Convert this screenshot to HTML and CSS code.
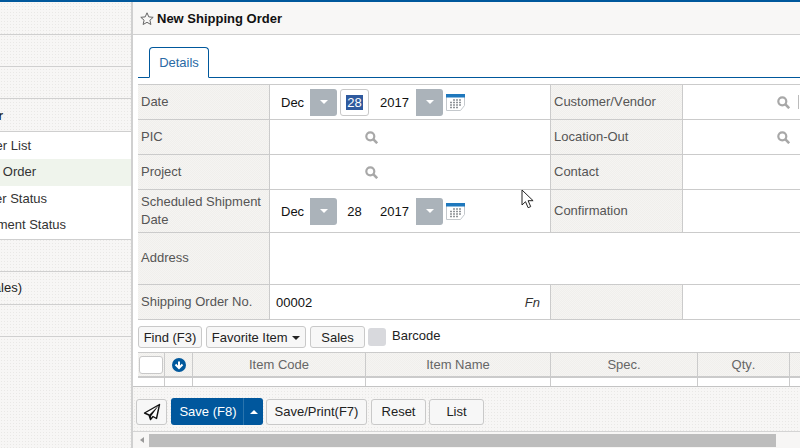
FILE: index.html
```html
<!DOCTYPE html>
<html lang="en">
<head>
<meta charset="utf-8">
<title>New Shipping Order</title>
<link rel="stylesheet" href="styles.css">
</head>
<body>
<div class="topbar"></div>
<div class="app">
  <aside class="side">
    <div class="side-row first"></div>
    <div class="side-row"></div>
    <div class="side-row"></div>
    <div class="side-row tall"><span class="side-text bold p-r">Shipping Order</span></div>
    <ul class="side-list">
      <li class="side-item p-a">Shipping Order List</li>
      <li class="side-item active p-b">New Shipping Order</li>
      <li class="side-item p-c">Shipping Order Status</li>
      <li class="side-item p-d">Shipment Status</li>
    </ul>
    <div class="side-row"></div>
    <div class="side-row tall"><span class="side-text p-e">Order (Sales)</span></div>
    <div class="side-row"></div>
  </aside>
  <main class="main">
    <header class="title">
      <svg class="star" width="14" height="14" viewBox="0 0 14 14"><path d="M7 .8l1.800 4.100 4.400.4-3.300 2.900 1 4.300L7 10.300l-3.900 2.200 1-4.300L.8 5.300l4.400-.4z" fill="none" stroke="#666" stroke-width="1"/></svg>
      <b>New Shipping Order</b>
    </header>
    <div class="tabs"><div class="tab">Details</div></div>
    <section class="form">
      <div class="lbl r1">Date</div>
      <div class="val date r1">
        <span class="mon">Dec</span><span class="sel"><i class="caret"></i></span><span class="day boxed"><em>28</em></span><span class="yr">2017</span><span class="sel"><i class="caret"></i></span>
        <svg class="cal" width="19" height="17" viewBox="0 0 19 17"><path d="M.5 .5h18v11l-4 5H.5z" fill="#fff" stroke="#c4c8cc"/><rect width="19" height="3.500" fill="#1f78bd"/><path d="M4 11h2M7 11h2M10 11h2M13 11h2M4 8.500h2M7 8.500h2M10 8.500h2M13 8.500h2M7 6h2M10 6h2M13 6h2M4 13.500h2M7 13.500h2M10 13.500h2" stroke="#8e9297" stroke-width="1.500"/></svg>
      </div>
      <div class="lbl r1">Customer/Vendor</div>
      <div class="val search end r1">
        <svg class="mag" width="13" height="13" viewBox="0 0 13 13"><circle cx="5.300" cy="5.300" r="4" fill="none" stroke="#a8a8a8" stroke-width="2.200"/><path d="M8.200 8.200l4 4" stroke="#a8a8a8" stroke-width="2.600"/></svg><span class="sep"></span>
      </div>

      <div class="lbl r1">PIC</div>
      <div class="val search mid r1">
        <svg class="mag" width="13" height="13" viewBox="0 0 13 13"><circle cx="5.300" cy="5.300" r="4" fill="none" stroke="#a8a8a8" stroke-width="2.200"/><path d="M8.200 8.200l4 4" stroke="#a8a8a8" stroke-width="2.600"/></svg>
      </div>
      <div class="lbl r1">Location-Out</div>
      <div class="val search end r1">
        <svg class="mag" width="13" height="13" viewBox="0 0 13 13"><circle cx="5.300" cy="5.300" r="4" fill="none" stroke="#a8a8a8" stroke-width="2.200"/><path d="M8.200 8.200l4 4" stroke="#a8a8a8" stroke-width="2.600"/></svg><span class="sep blank"></span>
      </div>

      <div class="lbl r1">Project</div>
      <div class="val search mid r1">
        <svg class="mag" width="13" height="13" viewBox="0 0 13 13"><circle cx="5.300" cy="5.300" r="4" fill="none" stroke="#a8a8a8" stroke-width="2.200"/><path d="M8.200 8.200l4 4" stroke="#a8a8a8" stroke-width="2.600"/></svg>
      </div>
      <div class="lbl r1">Contact</div>
      <div class="val r1"></div>

      <div class="lbl r2">Scheduled Shipment Date</div>
      <div class="val date r2">
        <span class="mon">Dec</span><span class="sel"><i class="caret"></i></span><span class="day">28</span><span class="yr">2017</span><span class="sel"><i class="caret"></i></span>
        <svg class="cal" width="19" height="17" viewBox="0 0 19 17"><path d="M.5 .5h18v11l-4 5H.5z" fill="#fff" stroke="#c4c8cc"/><rect width="19" height="3.500" fill="#1f78bd"/><path d="M4 11h2M7 11h2M10 11h2M13 11h2M4 8.500h2M7 8.500h2M10 8.500h2M13 8.500h2M7 6h2M10 6h2M13 6h2M4 13.500h2M7 13.500h2M10 13.500h2" stroke="#8e9297" stroke-width="1.500"/></svg>
      </div>
      <div class="lbl r2">Confirmation</div>
      <div class="val r2"></div>

      <div class="lbl r3">Address</div>
      <div class="val wide r3"></div>

      <div class="lbl r1 last">Shipping Order No.</div>
      <div class="val num r1 last"><span>00002</span><i class="fn">Fn</i></div>
      <div class="lbl r1 last"></div>
      <div class="val r1 last"></div>
    </section>
    <div class="tools">
      <button class="btn">Find (F3)</button>
      <button class="btn fav">Favorite Item <i class="caret dark"></i></button>
      <button class="btn sales">Sales</button>
      <span class="check"></span>
      <span class="barcode">Barcode</span>
    </div>
    <section class="grid">
      <div class="th"><span class="box"></span></div>
      <div class="th"><svg width="14" height="14" viewBox="0 0 14 14"><circle cx="7" cy="7" r="7" fill="#00589c"/><path d="M3.500 6.500L7 10l3.500-3.500M7 3.500V9.500" fill="none" stroke="#fff" stroke-width="2"/></svg></div>
      <div class="th">Item Code</div>
      <div class="th">Item Name</div>
      <div class="th">Spec.</div>
      <div class="th">Qty.</div>
      <div class="th"></div>
      <div class="td"></div><div class="td"></div><div class="td"></div><div class="td"></div><div class="td"></div><div class="td"></div><div class="td"></div>
    </section>
    <footer class="foot">
      <button class="btn act plane"><svg width="18" height="18" viewBox="0 0 18 18"><path d="M16.500 1.500L1.500 10l4.500 2 1.500 4.500 2.500-3 3.500 2z" fill="#fff" stroke="#111" stroke-width="1.400" stroke-linejoin="round"/><path d="M16.500 1.500L6 12l1.500 4.500.7-3.500z" fill="#111"/></svg></button>
      <div class="save"><span class="save-main">Save (F8)</span><span class="save-drop"><i class="caret up"></i></span></div>
      <button class="btn act print">Save/Print(F7)</button>
      <button class="btn act reset">Reset</button>
      <button class="btn act list">List</button>
    </footer>
    <div class="scroll"><i class="arrow"></i><span class="thumb"></span></div>
    <svg class="cursor" width="14" height="20" viewBox="0 0 14 20"><path d="M1 1v15l3.500-3.300 2.600 6 2.600-1.100-2.600-5.900h5z" fill="#fff" stroke="#222" stroke-width="1"/></svg>
  </main>
</div>
</body>
</html>
```
FILE: styles.css
```css
* { box-sizing: border-box; }
html, body { margin: 0; height: 448px; overflow: hidden; background: #fff; }
body { font-family: "Liberation Sans", Arial, sans-serif; font-size: 13px; color: #222; font-kerning: none; }
button { font: inherit; color: inherit; }
.topbar { height: 2px; background: #00589c; }
.app { display: flex; height: 446px; }

.side {
  width: 133px; flex: none; border-right: 2px solid #d0d0d0; overflow: hidden;
  background-color: #f7f6f5;
  background-image: radial-gradient(#e9e8e6 .6px, transparent .7px);
  background-size: 3px 3px;
}
.side-row { height: 32px; border-bottom: 1px solid #cfcfcf; display: flex; align-items: center; justify-content: flex-end; overflow: hidden; white-space: nowrap; }
.side-row.first { height: 33px; }
.side-row.tall { height: 33px; }
.side-text { flex: none; }
.bold { font-weight: bold; }
.side-list { list-style: none; margin: 0; padding: .5px 0 0; background: #fff; height: 108px; border-bottom: 1px solid #cfcfcf; }
.side-item { height: 26.500px; padding-bottom: 1px; display: flex; align-items: center; justify-content: flex-end; overflow: hidden; white-space: nowrap; color: #333; }
.side-item.active { background: #eff4ec; }
.p-r { margin-right: 128px; }
.p-a { padding-right: 100px; }
.p-b { padding-right: 95px; }
.p-c { padding-right: 84px; }
.p-d { padding-right: 65px; }
.p-e { margin: 0 109px 2px 0; }

.main { flex: 1; min-width: 0; display: flex; flex-direction: column; position: relative; overflow: hidden; }
.title {
  height: 33px; flex: none; display: flex; align-items: center; gap: 3px; padding: 1px 0 0 7px; color: #111;
  border-bottom: 1px solid #d0d0d0; background-color: #f8f7f6;
}
.star { flex: none; }
.tabs { margin: 12px 0 0 5px; height: 31px; flex: none; border-bottom: 1px solid #00589c; padding-left: 11px; display: flex; }
.tab { width: 60px; height: 31px; margin-bottom: -1px; background: #fff; border: 1px solid #00589c; border-bottom-color: #fff; border-radius: 4px 4px 0 0; color: #2a6aa5; display: flex; align-items: center; justify-content: center; }

.form {
  flex: none; width: 672px; margin: 6px 0 0 5px; display: grid;
  grid-template-columns: 132px 281px 132px 127px;
  border-top: 1px solid #cbcbcb;
}
.lbl {
  padding: 0 3px; display: flex; align-items: center; line-height: 18px; color: #555;
  border-right: 1px solid #cbcbcb; border-bottom: 1px solid #cbcbcb;
  background-color: #f2f1ee;
  background-image: repeating-conic-gradient(#f0efec 0 25%, #f5f4f2 0 50%);
  background-size: 2px 2px;
}
.val { border-bottom: 1px solid #cbcbcb; border-right: 1px solid #cbcbcb; display: flex; align-items: center; min-width: 0; overflow: hidden; }
.r1 { height: 35px; }
.r2 { height: 43px; }
.r3 { height: 52px; }
.lbl.r3 { padding-bottom: 2px; }
.wide { grid-column: 2 / 5; }
.date { padding-left: 11px; }
.mon { width: 29px; color: #111; }
.sel { width: 27px; height: 27px; flex: none; background: #abb3ba; border-radius: 0 3px 3px 0; display: flex; align-items: center; justify-content: center; }
.caret { width: 0; height: 0; border: 4px solid transparent; border-top-color: #fff; border-bottom: 0; display: inline-block; }
.caret.dark { border-top-color: #222; vertical-align: 2px; margin-left: 1px; }
.caret.up { border-top: 0; border-bottom: 4px solid #fff; }
.day { width: 29px; height: 27px; margin-left: 3px; display: flex; align-items: center; justify-content: center; color: #111; border: 1px solid transparent; }
.day.boxed { border-color: #c8c8c8; border-radius: 3px; }
.day em { font-style: normal; background: #2f5a9e; color: #fff; padding: 0 1px; line-height: 15px; }
.yr { width: 47px; padding-left: 11px; color: #111; }
.cal { margin-left: 3px; flex: none; }
.search.mid { padding-left: 95px; }
.search.end { justify-content: flex-end; }
.sep { width: 1px; height: 14px; background: #bbb; margin: 0 10px 0 8px; flex: none; }
.sep.blank { background: transparent; }
.num { padding: 0 10px 0 6px; justify-content: space-between; color: #111; }
.fn { color: #333; }

.tools { flex: none; display: flex; align-items: center; height: 22px; margin: 6px 0 0 5px; }
.btn { height: 22px; padding: 0; border: 1px solid #c9c9c9; border-radius: 3px; background: #f7f7f7; color: #222; width: 64px; margin-right: 4px; white-space: nowrap; }
.fav { width: 100px; }
.sales { width: 55px; margin-right: 3px; }
.check { width: 18px; height: 18px; background: #d8d9dd; border-radius: 3px; margin-right: 6px; }
.barcode { color: #222; margin-top: -3px; }

.grid {
  flex: none; width: 672px; margin: 4px 0 0 5px; display: grid;
  grid-template-columns: 27px 28px 173px 185px 147px 92px 1fr;
  grid-template-rows: 26px 8px;
}
.th {
  display: flex; align-items: center; justify-content: center; color: #666;
  border-top: 1px solid #cbcbcb; border-right: 1px solid #cbcbcb; border-bottom: 2px solid #cbcbcb;
  background-color: #f2f1ee;
  background-image: repeating-conic-gradient(#f0efec 0 25%, #f5f4f2 0 50%);
  background-size: 2px 2px;
}
.td { border-right: 1px solid #cbcbcb; }
.box { width: 24px; height: 18px; background: #fff; border: 1px solid #c8c8c8; border-radius: 3px; }

.foot {
  flex: 1; display: flex; align-items: center; padding: 5px 0 0 3px;
  border-top: 1px solid #c4c4c4; border-bottom: 1px solid #d4d4d4;
  background-color: #f7f6f5;
  background-image: radial-gradient(#e9e8e6 .6px, transparent .7px);
  background-size: 3px 3px;
}
.act { height: 26px; background: #f7f7f7; margin-right: 3px; }
.plane { width: 31px; margin-right: 4px; display: flex; align-items: center; justify-content: center; }
.save { width: 92px; height: 27px; background: #00579d; color: #fff; border-radius: 3px; display: flex; margin-right: 3px; }
.save-main { flex: 1; display: flex; align-items: center; justify-content: center; padding-left: 2px; }
.save-drop { width: 20px; border-left: 1px solid #2a74ad; display: flex; align-items: center; justify-content: center; }
.print { width: 101px; margin-right: 4px; }
.reset { width: 55px; }
.list { width: 55px; }

.scroll { flex: none; height: 16px; display: flex; align-items: center; padding-left: 7px; background: #f7f6f5; }
.arrow { width: 0; height: 0; border: 3.500px solid transparent; border-right: 4px solid #999; border-left: 0; }
.thumb { width: 627px; height: 13px; margin-left: 5px; background: #bdbdbd; }
.cursor { position: absolute; left: 388px; top: 187px; }
```
